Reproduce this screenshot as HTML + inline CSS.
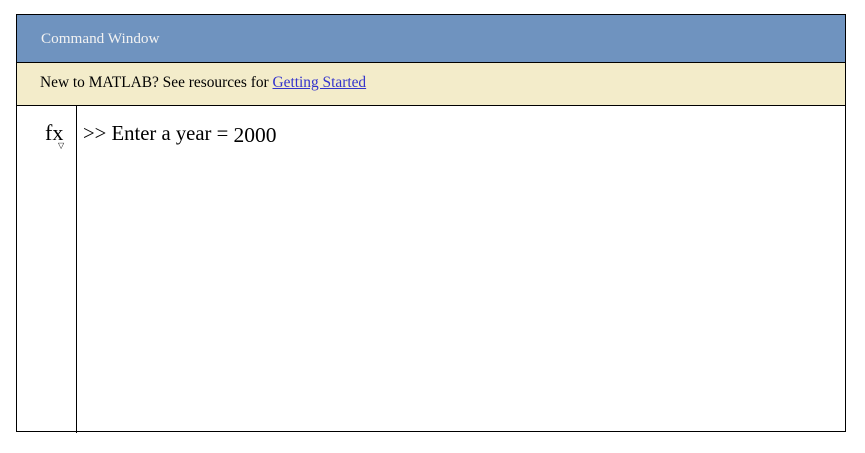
<!DOCTYPE html>
<html><head><style>
body{margin:0;width:865px;height:453px;background:#fff;position:relative;font-family:"Liberation Serif",serif;overflow:hidden}
.box{position:absolute;left:16px;top:14px;width:828px;height:416px;border:1px solid #000;box-sizing:content-box}
.hdr{position:absolute;left:0;top:0;width:828px;height:47px;background:#6f93bf;border-bottom:1px solid #000;}
.hdr span{position:absolute;left:24px;top:15px;color:#f2f2f2;font-size:15.2px}
.yel{position:absolute;left:0;top:48px;width:828px;height:42px;background:#f3ecca;border-bottom:1px solid #000}
.yel span{position:absolute;left:23px;top:11px;font-size:15.4px;color:#000}
.yel a{color:#3333cc;text-decoration:underline}
.vl{position:absolute;left:59px;top:91px;width:1px;height:327px;background:#000}
.fx{position:absolute;left:28px;top:105px;font-size:22px}
.tri{position:absolute;left:41px;top:126px;font-size:8px}
.cmd{position:absolute;left:66px;top:106px;font-size:20.7px}
.cmd b{font-weight:normal;font-size:21.5px;position:relative;top:2px}
</style></head><body>
<div class="box">
<div class="hdr"><span>Command Window</span></div>
<div class="yel"><span>New to MATLAB? See resources for <a>Getting Started</a></span></div>
<div class="vl"></div>
<div class="fx">fx</div>
<div class="tri">▽</div>
<div class="cmd">&gt;&gt; Enter a year = <b>2000</b></div>
</div>
</body></html>
